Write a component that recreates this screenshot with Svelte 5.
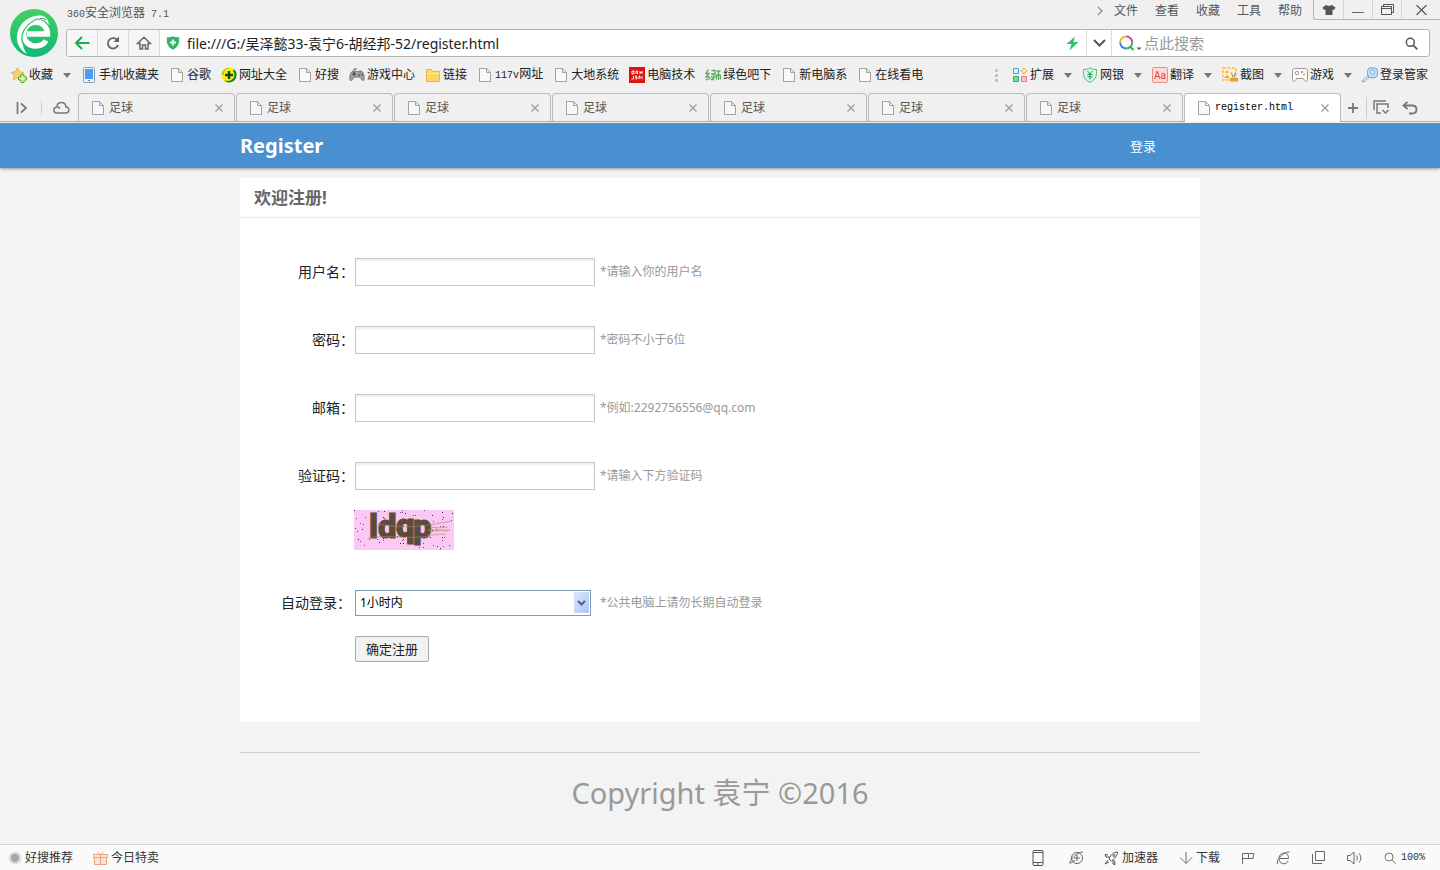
<script>
  const bookmarks = [
    { icon: 'phone', text: '手机收藏夹' },
    { icon: 'page', text: '谷歌' },
    { icon: 'nav', text: '网址大全' },
    { icon: 'page', text: '好搜' },
    { icon: 'pad', text: '游戏中心' },
    { icon: 'folder', text: '链接' },
    { icon: 'page', code: '117v', text: '网址' },
    { icon: 'page', text: '大地系统' },
    { icon: 'red', text: '电脑技术' },
    { icon: 'green', text: '绿色吧下' },
    { icon: 'page', text: '新电脑系' },
    { icon: 'page', text: '在线看电' }
  ];
  const tools = [
    { icon: 'ext', text: '扩展' },
    { icon: 'bank', text: '网银' },
    { icon: 'trans', text: '翻译' },
    { icon: 'shot', text: '截图' },
    { icon: 'game', text: '游戏' },
    { icon: 'key', text: '登录管家' }
  ];
  const menus = ['文件', '查看', '收藏', '工具', '帮助'];
  const tabs = ['足球', '足球', '足球', '足球', '足球', '足球', '足球'];
  const fields = [
    { id: 'user', label: '用户名：', hint: '*请输入你的用户名', type: 'text' },
    { id: 'pass', label: '密码：', hint: '*密码不小于6位', type: 'password' },
    { id: 'mail', label: '邮箱：', hint: '*例如:2292756556@qq.com', type: 'text' },
    { id: 'code', label: '验证码：', hint: '*请输入下方验证码', type: 'text' }
  ];
  const specks = Array.from({ length: 80 }, (_, i) => [(i * 37 + ((i * i * 7) % 23)) % 99, (i * 17 + ((i * i * 5) % 19)) % 39]);
  let address = $state('file:///G:/吴泽懿33-袁宁6-胡经邦-52/register.html');
</script>

{#snippet icon(name)}
  <svg width="16" height="16" viewBox="0 0 16 16" fill="none" aria-hidden="true">
    {#if name === 'page'}
      <path d="M2.500 1.500h7l4 4v9h-11zM9.500 1.500v4h4" stroke="#a2a2a2" fill="#f8f8f8" />
    {:else if name === 'star'}
      <path d="M6.500 .8l1.900 4 4.400.6-3.200 3 .8 4.400-3.900-2.100-4 2.100.8-4.400-3.200-3 4.400-.6z" fill="#fbd56c" stroke="#e0a33a" stroke-width=".8" />
      <path d="M10 7.500h3v2.500h2.500v3h-2.500v2.500h-3v-2.500H7.500v-3H10z" fill="#dcf8b0" stroke="#58ad1b" />
    {:else if name === 'phone'}
      <rect x="2.500" y=".5" width="11" height="15" rx="1" fill="#e9f1fa" stroke="#8a9db5" />
      <path d="M4 2h8v10H4z" fill="#4c9df0" /><path d="M7 13.500h2" stroke="#7a8796" />
    {:else if name === 'nav'}
      <circle cx="8" cy="8" r="7.500" fill="#ffe814" />
      <path d="M15.500 8A7.500 7.500 0 0 1 3 13.600C7 14.500 10 13.500 11.500 12 14 10 13.500 6 12 4l1-2A7.500 7.500 0 0 1 15.500 8z" fill="#0d8c2d" />
      <path d="M.5 8A7.500 7.500 0 0 1 9 .6C5 1.500 3 4 2.500 8z" fill="#a8cf1b" />
      <path d="M8 4v8M4 8h8" stroke="#064f1d" stroke-width="2.400" />
    {:else if name === 'pad'}
      <path d="M3 4.500c2-1 3 0 5 0s3-1 5 0c2 1.500 3 8 1.500 9-2 .5-2.500-3.500-4.500-3.500H6c-2 0-2.500 4-4.500 3.500C0 12.500 1 6 3 4.500z" fill="#a5a2a2" stroke="#666" stroke-width=".8" />
      <path d="M3 7h4M5 5v4" stroke="#444" stroke-width="1.200" /><circle cx="11.500" cy="6" r="1" fill="#4ab54a" /><circle cx="13" cy="8" r="1" fill="#d33" /><circle cx="10" cy="8" r="1" fill="#36c" /><path d="M5 4V2h3" stroke="#666" />
    {:else if name === 'folder'}
      <path d="M1.500 2.500h5l1.500 2h6.500v10h-13z" fill="#fbd866" stroke="#e5b73f" />
      <path d="M2 6.500h12.500" stroke="#fdeaa2" />
    {:else if name === 'red'}
      <path d="M0 0h16v16H0z" fill="#dd1510" />
      <path d="M3 4v3h2V4zM7 7V4h1.500v3M11 4v3M13 4v3M11 5.500h2M4.500 9v3H2.500M8 9H6.500v1.500H8V12H6.500M10 12V9h1v3M13 9v3" stroke="#fff" stroke-width=".9" />
    {:else if name === 'green'}
      <path d="M3.500 2.500L1 6.500h3l-3 3.500h4M.5 13l5-1.500M6.500 3.500h3.500v3M6 7h5M8.500 7v6.500M6 9.500l1.500 1M11 9l-1.500 1.500M6 13l2-1.500M11.500 4h4M13.500 4v9M11.500 8h4M15.500 8v4.500M11.500 8v4.500" stroke="#5cab5a" stroke-width="1.300" />
    {:else if name === 'ext'}
      <path d="M1.500 1.500h5v5h-5z" fill="#e0f0ff" stroke="#4a9fdf" /><path d="M1.500 9.500h5v5h-5z" fill="#70df9a" stroke="#2ab766" /><path d="M9.500 9.500h5v5h-5z" fill="#ffc0c8" stroke="#ea7b84" /><path d="M12 1l1.200 1.800L15 4l-1.800 1.200L12 7l-1.200-1.800L9 4l1.800-1.200z" fill="#fff0c4" stroke="#eeaa35" />
    {:else if name === 'bank'}
      <path d="M8 .8c2 1.400 4 1.800 6.500 1.700.5 6-.5 10-6.500 12.800C2 12.500 1 8.500 1.500 2.500 4 2.600 6 2.200 8 .8z" fill="#d9f7e3" stroke="#45bf78" />
      <path d="M5.500 4L8 7l2.500-3M8 7v5.500M5.500 7.500h5M5.500 9.800h5" stroke="#1f9c55" />
    {:else if name === 'trans'}
      <rect x=".5" y=".5" width="15" height="15" rx="1" fill="#ffd9d6" stroke="#e98d87" />
      <text x="8" y="12" text-anchor="middle" font-size="10" font-family="Roboto, sans-serif" fill="#d9463f">Aa</text>
    {:else if name === 'shot'}
      <rect x=".8" y="1" width="13" height="12" fill="#fff0c8" stroke="#f3b75b" stroke-width="1.400" stroke-dasharray="3 1.500" />
      <circle cx="5" cy="5" r="1.500" fill="#f0b050" /><path d="M2 11l3-3 3 3z" fill="#efa73a" /><path d="M9.500 5.500l1.500 5M13.500 5.500l-1.500 5" stroke="#888" /><path d="M8 11h8v3.500H8z" fill="#ec9a28" />
    {:else if name === 'game'}
      <path d="M2.500 1.500h11c1.500 0 2 1 2 2v9c0 2-2 2.500-3 1l-1-2h-7l-1 2c-1 1.500-3 1-3-1v-9c0-1 .5-2 2-2z" fill="#fafafa" stroke="#999" />
      <circle cx="5" cy="6" r="1.700" stroke="#999" /><circle cx="10" cy="5" r="1" fill="#e25a4d" /><circle cx="12" cy="7.500" r="1" fill="#e4a338" />
    {:else if name === 'key'}
      <path d="M6 10l-4.500 4" stroke="#8aa3b8" stroke-width="3" stroke-linecap="round" /><path d="M6 10l-4.500 4" stroke="#eef6fd" stroke-width="1.200" />
      <rect x="5.500" y=".8" width="10" height="10" rx="3.500" fill="#bfe0fb" stroke="#6ba6d6" /><circle cx="10.500" cy="5" r="2" fill="#f4faff" stroke="#6ba6d6" />
    {/if}
  </svg>
{/snippet}

{#snippet closeX()}
  <svg width="8" height="8" viewBox="0 0 8 8" aria-hidden="true"><path d="M.5 .5l7 7M7.500 .5l-7 7" stroke="#9b9b9b" stroke-width="1.200" /></svg>
{/snippet}

<div class="window">
  <header class="chrome">
    <div class="head">
      <svg class="logo" width="48" height="48" viewBox="0 0 48 48" aria-hidden="true">
        <defs><linearGradient id="lg" x1="0" y1="0" x2="0" y2="1"><stop offset="0" stop-color="#45cf64" /><stop offset="1" stop-color="#10b877" /></linearGradient></defs>
        <circle cx="24" cy="24" r="24" fill="url(#lg)" />
        <path d="M17 25h20.500C37.500 18 32 13 25.500 13a12 12 0 1 0 0 24c5 0 8.500-2 10.500-5.500" fill="none" stroke="#fff" stroke-width="5.500" />
        <path d="M17 45C6 39 4 26 11 16 16 9 28 4 35 8c3 2 4 5 3.500 8C36 11 31 9 26 11 13 15 8 32 17 45z" fill="#fff" />
        <path d="M14 36C8 27 15 15 28 9.500M28 11c3-2 6-2 8 0" fill="none" stroke="#2bc267" stroke-width="1.300" />
      </svg>
      <div class="headmain">
        <div class="titlebar">
          <span class="apptitle"><span class="code">360</span>安全浏览器<span class="code">&nbsp;7.1</span></span>
          <nav class="menus">
            <svg width="6" height="10" viewBox="0 0 6 10" aria-hidden="true"><path d="M.8 .8L5 5 .8 9.200" fill="none" stroke="#888" stroke-width="1.200" /></svg>
            {#each menus as m}<button>{m}</button>{/each}
          </nav>
          <div class="winbtns">
            <button aria-label="皮肤"><svg width="14" height="12" viewBox="0 0 14 12"><path d="M4 1l3 1 3-1 3.500 2.500L12 6l-1.500-.5V11h-7V5.500L2 6 .5 3.500z" fill="#555" /></svg></button>
            <button aria-label="最小化"><svg width="12" height="10" viewBox="0 0 12 10"><path d="M0 7.500h12" stroke="#666" /></svg></button>
            <button aria-label="还原"><svg width="13" height="11" viewBox="0 0 13 11"><path d="M2.500 2.500v-2h10v8h-2M.5 2.500h10v8H.5zM.5 4.500h10" fill="none" stroke="#555" /></svg></button>
            <button aria-label="关闭"><svg width="11" height="10" viewBox="0 0 11 10"><path d="M.5 0l10 10M10.500 0l-10 10" stroke="#555" stroke-width="1.200" /></svg></button>
          </div>
        </div>
        <div class="address">
          <button class="nav" aria-label="后退"><svg width="16" height="14" viewBox="0 0 16 14"><path d="M8 1L2 7l6 6M2 7h13.500" fill="none" stroke="#19ad55" stroke-width="2" /></svg></button>
          <button class="nav" aria-label="刷新"><svg width="14" height="14" viewBox="0 0 14 14"><path d="M11.500 4.500A5.200 5.200 0 1 0 12 9" fill="none" stroke="#666" stroke-width="1.800" /><path d="M13 .5V6H7.500z" fill="#666" /></svg></button>
          <button class="nav" aria-label="主页"><svg width="16" height="14" viewBox="0 0 16 14"><path d="M1.500 7.500L8 1.200l6.500 6.300H12V13H9.500V9h-3v4H4V7.500z" fill="none" stroke="#666" stroke-width="1.500" /></svg></button>
          <svg class="shield" width="14" height="14" viewBox="0 0 14 14" aria-hidden="true"><path d="M1 1c2 .6 4 .4 6-.7 2 1.100 4 1.300 6 .7.700 6-.5 10-6 12.700C1.500 11 .3 7 1 1z" fill="#2cb864" /><path d="M7 3.500v6M4 6.500h6" stroke="#fff" stroke-width="1.800" /></svg>
          <input class="url" aria-label="地址" bind:value={address} />
          <button class="bolt" aria-label="极速"><svg width="13" height="15" viewBox="0 0 13 15"><path d="M9 .5L.5 8h5L3.500 14.500 12.500 6h-5z" fill="#2cc36a" /></svg></button>
          <button class="drop" aria-label="展开"><svg width="13" height="8" viewBox="0 0 13 8"><path d="M1 1l5.500 5.500L12 1" fill="none" stroke="#555" stroke-width="2" /></svg></button>
          <svg class="engine" width="24" height="16" viewBox="0 0 24 16" fill="none" stroke-width="2" aria-hidden="true">
            <path d="M1.200 7.500A6 6 0 0 1 7.200 1.500" stroke="#f5b528" /><path d="M7.200 1.500a6 6 0 0 1 6 6" stroke="#e04394" /><path d="M13.200 7.500a6 6 0 0 1-6 6" stroke="#31b25b" /><path d="M7.200 13.500a6 6 0 0 1-6-6" stroke="#4a7be0" /><path d="M11 11.500l3.500 3.500" stroke="#31b25b" /><path d="M17.500 12.500h5l-2.500 2.500z" fill="#555" stroke="none" />
          </svg>
          <input class="search" aria-label="搜索" placeholder="点此搜索" />
          <button class="mag" aria-label="搜索"><svg width="13" height="13" viewBox="0 0 13 13"><circle cx="5.300" cy="5.300" r="4" fill="none" stroke="#555" stroke-width="1.500" /><path d="M8.300 8.300l4 4" stroke="#555" stroke-width="1.800" /></svg></button>
        </div>
      </div>
    </div>

    <div class="bookmarks">
      <button class="bm">{@render icon('star')}收藏</button>
      <i class="caret"></i>
      {#each bookmarks as b}
        <button class="bm">{@render icon(b.icon)}<span>{#if b.code}<span class="code">{b.code}</span>{/if}{b.text}</span></button>
      {/each}
      <i class="dots"></i>
      {#each tools as t, i}
        <button class="bm">{@render icon(t.icon)}{t.text}</button>
        {#if i < tools.length - 1}<i class="caret"></i>{/if}
      {/each}
    </div>

    <div class="tabbar">
      <div class="tableft">
        <button aria-label="侧边栏"><svg width="12" height="12" viewBox="0 0 12 12"><path d="M1.500 0v12M5 1.500L10 6l-5 4.500" fill="none" stroke="#777" stroke-width="1.700" /></svg></button>
        <i class="sep"></i>
        <button aria-label="云"><svg width="17" height="13" viewBox="0 0 17 13"><path d="M4.500 12C-.5 12 0 6 4 6c0-6 8.500-6 9 0 4 0 4 6-.5 6zM4 6c1.500 0 2.500.6 3 1.800" fill="none" stroke="#777" stroke-width="1.500" /></svg></button>
      </div>
      <div class="tabs">
        {#each tabs as t}
          <div class="tab">{@render icon('page')}<span>{t}</span><button aria-label="关闭标签">{@render closeX()}</button></div>
        {/each}
        <div class="tab active">{@render icon('page')}<span class="code">register.html</span><button aria-label="关闭标签">{@render closeX()}</button></div>
      </div>
      <div class="tabright">
        <button aria-label="新标签"><svg width="12" height="12" viewBox="0 0 12 12"><path d="M6 1v10M1 6h10" stroke="#777" stroke-width="1.800" /></svg></button>
        <i class="sep"></i>
        <button aria-label="标签列表"><svg width="17" height="15" viewBox="0 0 17 15" fill="none" stroke="#777" stroke-width="1.500"><path d="M1 10V1h12M8 13H4V4h11v4M9.500 10l3 3 3-3" /></svg></button>
        <button class="undo" aria-label="撤销关闭"><svg width="16" height="14" viewBox="0 0 16 14" fill="none" stroke="#777" stroke-width="1.800"><path d="M5.500 .8L1.500 4.500l4 3.700M2 4.500h8c6 0 6 8 0 8H7" /></svg></button>
      </div>
    </div>
  </header>

  <div class="page">
    <div class="topbar">
      <div class="wrap bar">
        <h1>Register</h1>
        <a href="#login">登录</a>
      </div>
    </div>
    <main class="wrap card">
      <h2>欢迎注册!</h2>
      <form>
        {#each fields as f}
          <div class="row">
            <label for={f.id}>{f.label}</label>
            <input id={f.id} type={f.type} />
            <span class="hint">{f.hint}</span>
          </div>
        {/each}
        <svg class="captcha" width="100" height="40" viewBox="0 0 100 40" role="img" aria-label="验证码">
          <rect width="100" height="40" fill="#fac8f2" />
          {#each specks as [x, y], i}<rect {x} {y} width="1" height="1" fill={i % 3 ? '#7a4595' : '#3a2358'} />{/each}
          <text x="15 24 42 59" y="28 28 27 28" class="glyphs">ldqp</text>
          <path d="M14 28C35 24 50 30 76 26M22 14C50 18 60 18 98 11" stroke="#a98469" fill="none" stroke-width=".6" />
          <path d="M74 20h22M76 22c8-2 12-1 18-1M76 17c8 1 12 1 18 0M74 25c8 0 12-1 18-1" stroke="#c89a6a" fill="none" stroke-width=".8" />
        </svg>
        <div class="row auto">
          <label for="auto">自动登录：</label>
          <div class="selectbox">
            <select id="auto"><option>1小时内</option></select>
            <svg class="arrow" width="15" height="21" viewBox="0 0 15 21" aria-hidden="true"><defs><linearGradient id="ag" x1="0" y1="0" x2="1" y2="1"><stop offset="0" stop-color="#dbe6fe" /><stop offset="1" stop-color="#adc5f7" /></linearGradient></defs><rect width="15" height="21" rx="1" fill="url(#ag)" /><path d="M4 9l3.500 3.500L11 9" fill="none" stroke="#4d6185" stroke-width="2" /></svg>
          </div>
          <span class="hint">*公共电脑上请勿长期自动登录</span>
        </div>
        <button class="submit" type="button">确定注册</button>
      </form>
    </main>
    <footer class="wrap copy">Copyright 袁宁 ©2016</footer>
  </div>

  <div class="status">
    <button><svg width="14" height="14" viewBox="0 0 14 14"><circle cx="7" cy="7" r="6.500" fill="#dedede" /><circle cx="7" cy="7" r="4.200" fill="#a6a6a6" /></svg>好搜推荐</button>
    <button class="gift"><svg width="15" height="14" viewBox="0 0 15 14" fill="#fde5d5" stroke="#eba480"><path d="M1.500 6.500h12v7h-12zM.5 3.500h14v3H.5zM7.500 3.500v10M7.500 3.500L4.500 .8M7.500 3.500l3-2.700" /></svg>今日特卖</button>
    <div class="right">
      <button aria-label="手机"><svg width="12" height="16" viewBox="0 0 12 16" fill="none" stroke="#555"><rect x="1" y=".5" width="10" height="15" rx="1" /><path d="M1 2.500h10M1 12.500h10M5 14h2" /></svg></button>
      <button class="g1" aria-label="加速球"><svg width="15" height="14" viewBox="0 0 15 14" fill="none" stroke="#666"><circle cx="8" cy="7" r="5.500" /><path d="M1 13C0 9 8 1 14 1M5 7h6M8 4v6M2 12l4-3" /></svg></button>
      <button class="g2"><svg width="15" height="14" viewBox="0 0 15 14" fill="none" stroke="#555"><path d="M5 8C7 3 10 1 13.500 1c0 3-2 6-6 9zM6 6L2 6l-1-2.500 3 .5M9 9v4l2 .5-.5-4M4 9l-3 4 4-2" /><circle cx="10" cy="4.500" r="1" /></svg>加速器</button>
      <button class="g3"><svg width="14" height="14" viewBox="0 0 14 14" fill="none" stroke="#666"><path d="M7 1v11M1 6.500L7 12.500l6-6" /></svg>下载</button>
      <button class="g3" aria-label="旗标"><svg width="14" height="12" viewBox="0 0 14 12" fill="none" stroke="#666"><path d="M1.500 12V1.500h6v5h-6M7.500 1.500h5.500l-1 5H7.500" /></svg></button>
      <button class="g3" aria-label="内核"><svg width="15" height="14" viewBox="0 0 15 14" fill="none" stroke="#666"><path d="M4 7.500h8.500C13 0 3 .5 3 7.500 3 14 11 14 12 10M1.500 13C-.5 9 8 .5 13.500 1" /></svg></button>
      <button class="g3" aria-label="窗口"><svg width="13" height="13" viewBox="0 0 13 13" fill="none" stroke="#666"><path d="M3.500 .5h9v9h-9zM.5 3v9.500H10" /></svg></button>
      <button class="g3" aria-label="音量"><svg width="17" height="14" viewBox="0 0 17 14" fill="none" stroke="#666"><path d="M1.500 4.500v5h2.500l4 3.500V1L4 4.500zM10.500 4.500q2 2.500 0 5M13 2.500q4 4.500 0 9" /></svg></button>
      <button class="g3 zoom"><svg width="12" height="12" viewBox="0 0 12 12" fill="none" stroke="#777"><circle cx="5" cy="5" r="4" /><path d="M8 8l3.500 3.500" /></svg><span class="code">100%</span></button>
    </div>
  </div>
</div>

<style>
  :global(body) { margin: 0; }
  .window {
    min-height: 100vh; display: flex; flex-direction: column; background: #f3f3f3;
    font: 12px/16px "Noto Sans", "Noto Sans CJK SC", sans-serif; color: #222;
  }
  .window :global(*) { box-sizing: border-box; }
  svg { display: block; flex: none; }
  button { border: 0; background: none; padding: 0; margin: 0; font: inherit; color: inherit; display: flex; align-items: center; white-space: nowrap; }
  input, select { font: inherit; margin: 0; min-width: 0; outline: 0; }
  .code { font-family: "Liberation Mono", monospace; font-size: 10px; }
  .chrome { background: #f0f0f0; }
  .head { display: flex; height: 57px; }
  .logo { margin: 9px 8px 0 10px; }
  .headmain { flex: 1; min-width: 0; display: flex; flex-direction: column; }
  .titlebar { display: flex; height: 29px; align-items: flex-start; color: #555; }
  .apptitle { padding: 5px 0 0 1px; flex: 1; }
  .menus { display: flex; align-items: center; gap: 17px; padding: 3px 11px 0 0; }
  .menus svg { margin-right: -6px; }
  .menus svg + button { margin-left: 0; }
  .winbtns { display: flex; height: 20px; border: solid #b5b5b5; border-width: 0 0 1px 1px; border-bottom-left-radius: 3px; }
  .winbtns button { width: 29px; justify-content: center; }
  .winbtns button + button { border-left: 1px solid #d5d5d5; }
  .winbtns button:last-child { width: 39px; }
  .address { display: flex; align-items: center; height: 28px; margin-right: 10px; border: 1px solid #b4b4b4; border-radius: 3px; background: #fff; overflow: hidden; }
  .address .nav { width: 31px; height: 100%; justify-content: center; background: #f6f6f6; border-right: 1px solid #dcdcdc; }
  .shield { margin: 0 7px 0 6px; }
  .address input { border: 0; padding: 0; background: none; height: 24px; }
  .url { flex: 1; font-size: 14px; color: #222; }
  .bolt { width: 20px; height: 100%; }
  .drop { width: 26px; height: 100%; justify-content: center; border: solid #ddd; border-width: 0 1px; }
  .engine { margin: 0 1px 0 7px; }
  .search { width: 261px; font-size: 15px; }
  .search::placeholder { color: #999; opacity: 1; }
  .mag { width: 24px; }
  .bookmarks { display: flex; align-items: center; height: 36px; padding: 0 12px 0 11px; gap: 10px; }
  .bm { gap: 2px; }
  .caret { width: 8px; flex: none; border: solid transparent; border-width: 5px 4px 0; border-top-color: #777; }
  .dots { width: 3px; height: 13px; margin: 0 4px 0 auto; background: repeating-linear-gradient(#c4c4c4 0 3px, transparent 3px 5px); }
  .tabbar { display: flex; height: 30px; padding-bottom: 1px; background: linear-gradient(#f0f0f0 28px, #a9b4bd 28px 29px, #fff 29px); }
  .tableft { width: 78px; display: flex; align-items: center; padding-left: 16px; }
  .tableft .sep { margin: 0 11px 0 13px; }
  .sep { width: 1px; height: 14px; background: #ccc; }
  .tabs { display: flex; gap: 1px; min-width: 0; }
  .tab { width: 157px; height: 28px; min-width: 0; display: flex; align-items: center; padding: 0 11px; color: #555; border: 1px solid #bcbcbc; border-bottom: 0; border-radius: 4px 4px 0 0; }
  .tab > span { flex: 1; margin-left: 3px; white-space: nowrap; }
  .tab.active { height: 29px; background: #fff; color: #000; }
  .tabright { display: flex; align-items: center; padding-left: 6px; }
  .tabright .sep { height: 22px; margin: 0 6px 0 7px; }
  .undo { margin-left: 12px; }

  .page { flex: 1; }
  .wrap { max-width: 960px; margin: 0 auto; }
  .topbar { background: #4890cf; box-shadow: 0 1px 3px rgba(0, 0, 0, .4); }
  .bar { height: 45px; display: flex; align-items: center; justify-content: space-between; }
  .bar h1 { margin: 0; font-size: 20px; line-height: 28px; font-weight: 700; color: #fff; }
  .bar a { color: #fff; font-size: 13px; text-decoration: none; margin-right: 44px; }
  .card { margin-top: 10px; background: #fff; padding-bottom: 60px; }
  .card h2 { margin: 0; height: 40px; padding: 0 14px; border-bottom: 1px solid #eaeaea; font-size: 17px; line-height: 39px; font-weight: 700; color: #666; }
  form { padding-top: 40px; }
  .row { display: flex; align-items: center; height: 28px; margin-bottom: 40px; }
  .row label { width: 115px; padding-right: 1px; text-align: right; font-size: 14px; color: #222; }
  .row input { width: 240px; height: 28px; padding: 0 5px; border: 1px solid #c8c8c8; box-shadow: inset 0 2px 2px #eee; }
  .hint { margin-left: 5px; color: #999; }
  .captcha { margin: -20px 0 40px 114px; overflow: visible; }
  .glyphs { font: 900 33px Roboto, sans-serif; fill: #594d3a; stroke: #594d3a; stroke-width: 1px; }
  .row.auto { height: 26px; margin-bottom: 20px; }
  .row.auto label { padding-right: 4px; }
  .selectbox { position: relative; margin-right: 4px; }
  .selectbox select { appearance: none; display: block; width: 236px; height: 26px; padding: 0 20px 0 4px; border: 1px solid #7f9db9; border-radius: 0; background: #fff; color: #000; }
  .arrow { position: absolute; right: 2px; top: 2px; pointer-events: none; }
  .submit { margin-left: 115px; width: 74px; height: 26px; justify-content: center; border: 1px solid #aaa; border-radius: 2px; background: #f2f2f2; font-size: 13px; }
  .copy { margin-top: 30px; border-top: 1px solid #cfcfcf; padding: 20px 0 24px; text-align: center; font-size: 29px; line-height: 40px; color: #999; }
  .status { display: flex; align-items: center; height: 26px; padding: 0 15px 0 8px; background: #fafafa; border-top: 1px solid #d4d4d4; color: #333; }
  .status button { gap: 3px; }
  .gift { margin-left: 20px; }
  .right { display: flex; align-items: center; margin-left: auto; }
  .g1 { margin-left: 25px; }
  .g2 { margin-left: 20px; }
  .g3 { margin-left: 21px; }
  .status .zoom { gap: 5px; }
</style>
